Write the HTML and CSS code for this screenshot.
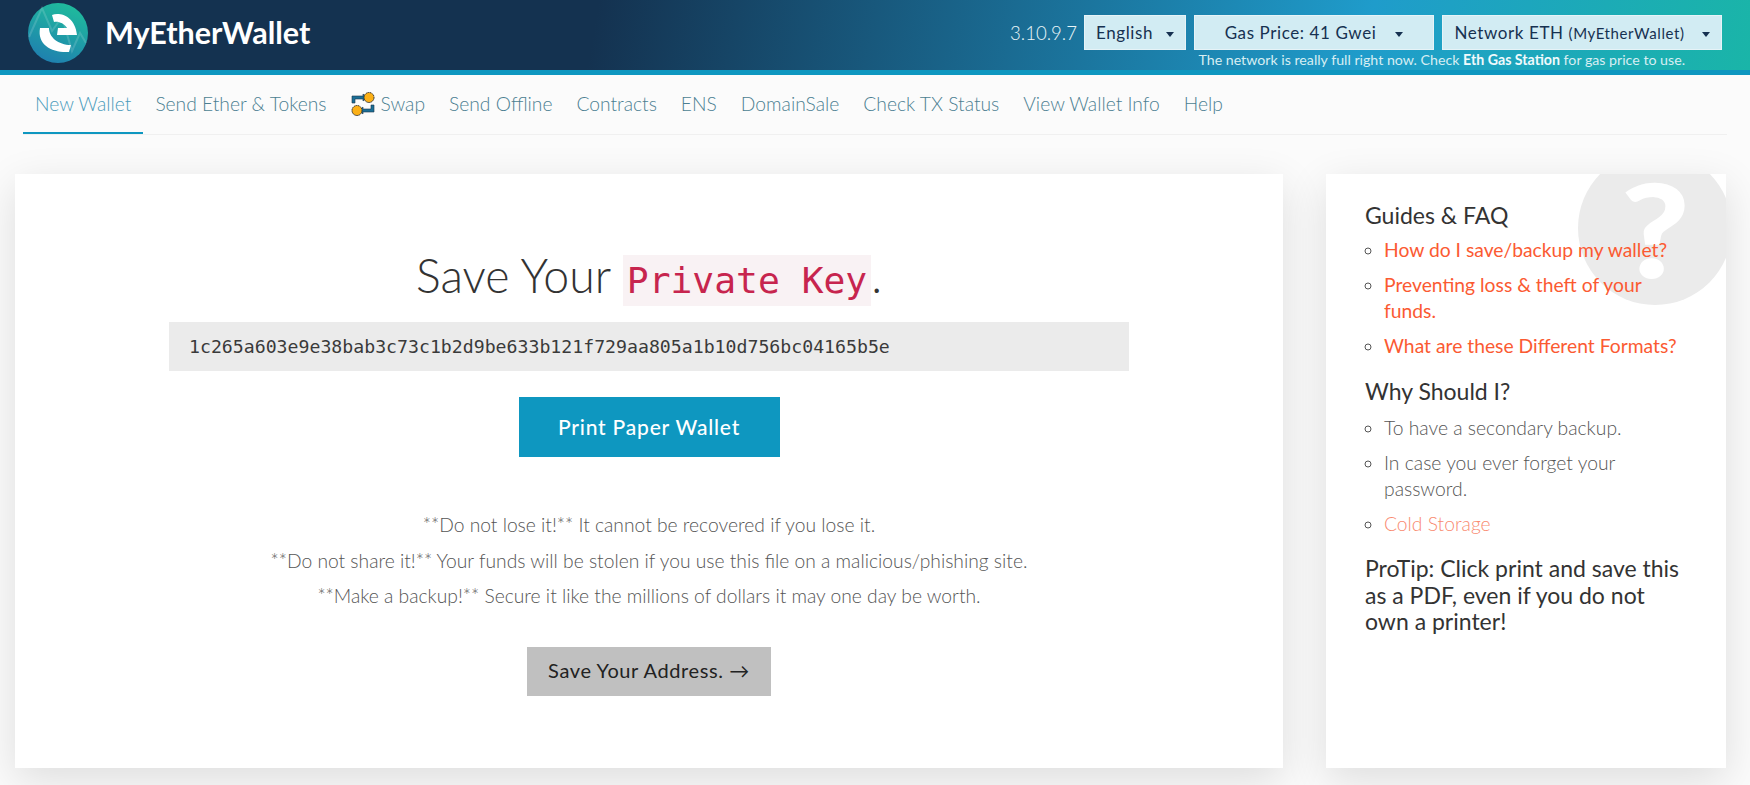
FILE: index.html
```html
<!DOCTYPE html>
<html lang="en">

<head>
    <meta charset="UTF-8">
    <meta name="viewport" content="width=device-width, initial-scale=1.0">
    <title>MyEtherWallet</title>

    <link rel="stylesheet" href="styles.css">
</head>

<body>
    <header class="top-bar">
        <div class="brand">
            <svg class="logo" viewBox="0 0 60 60" width="60" height="60">
                <defs>
                    <linearGradient id="logoFill" x1="0.7" y1="0" x2="0.3" y2="1">
                        <stop offset="0" stop-color="#1fbc9c"></stop>
                        <stop offset="1" stop-color="#1f7fb0"></stop>
                    </linearGradient>
                </defs>
                <circle cx="30" cy="30" r="30" fill="url(#logoFill)"></circle>
                <path d="M1 34 L14 5 L24 28 L34 14 L44 48 L52 30 L58 40" fill="none" stroke="#ffffff" stroke-opacity="0.15" stroke-width="2"></path>
                <path d="M24 12 C32 9 47 13 49 32 L29 32 L30 25 L39 25 C36 20 30 18 26 19 Z" fill="#ffffff"></path>
                <path d="M12 25 L21 25 C21 34 30 42 43 42 L41 49 C24 50 9 42 12 25 Z" fill="#ffffff"></path>
            </svg>
            <span class="brand-name">MyEtherWallet</span>
        </div>
        <div class="top-right">
            <div class="dropdowns">
                <span class="version">3.10.9.7</span>
                <button type="button" class="dd dd-lang">English <i class="caret"></i></button>
                <button type="button" class="dd dd-gas">Gas Price: 41 Gwei <i class="caret"></i></button>
                <button type="button" class="dd dd-net">Network ETH <small>(MyEtherWallet)</small> <i class="caret"></i></button>
            </div>
            <p class="gas-note">The network is really full right now. Check <b>Eth Gas Station</b> for gas price to use.</p>
        </div>
    </header>

    <nav class="main-nav">
        <a class="active" href="#">New Wallet</a>
        <a href="#">Send Ether &amp; Tokens</a>
        <a href="#">
            <svg class="swap-icon" viewBox="0 0 24 24" width="24" height="24">
                <path d="M1 4 H12 V2 L16 5.5 L12 9 V7 H4 V11 H1 Z" fill="#1b6f97" stroke="#1d3447" stroke-width="0.6"></path>
                <path d="M23 20 H12 V22 L8 18.5 L12 15 V17 H20 V13 H23 Z" fill="#1b6f97" stroke="#1d3447" stroke-width="0.6"></path>
                <circle cx="18" cy="5.5" r="5" fill="#fbb017" stroke="#222" stroke-width="1" stroke-dasharray="1.4 0.6"></circle>
                <circle cx="6" cy="18.5" r="5" fill="#fbb017" stroke="#222" stroke-width="1" stroke-dasharray="1.4 0.6"></circle>
            </svg>
            Swap
        </a>
        <a href="#">Send Offline</a>
        <a href="#">Contracts</a>
        <a href="#">ENS</a>
        <a href="#">DomainSale</a>
        <a href="#">Check TX Status</a>
        <a href="#">View Wallet Info</a>
        <a href="#">Help</a>
    </nav>

    <div class="content">
        <main class="card">
            <h1>Save Your <code>Private Key</code>.</h1>
            <div class="key-box">1c265a603e9e38bab3c73c1b2d9be633b121f729aa805a1b10d756bc04165b5e</div>
            <a class="btn btn-primary" href="#">Print Paper Wallet</a>
            <div class="warnings">
                <p>**Do not lose it!** It cannot be recovered if you lose it.</p>
                <p>**Do not share it!** Your funds will be stolen if you use this file on a malicious/phishing site.</p>
                <p>**Make a backup!** Secure it like the millions of dollars it may one day be worth.</p>
            </div>
            <a class="btn btn-next" href="#">Save Your Address. &rarr;</a>
        </main>

        <aside class="sidebar">
            <div class="help-mark"><span>?</span></div>
            <h4>Guides &amp; FAQ</h4>
            <ul>
                <li><a href="#">How do I save/backup my wallet?</a></li>
                <li><a href="#">Preventing loss &amp; theft of your funds.</a></li>
                <li><a href="#">What are these Different Formats?</a></li>
            </ul>
            <h4>Why Should I?</h4>
            <ul class="light">
                <li>To have a secondary backup.</li>
                <li>In case you ever forget your password.</li>
                <li><a href="#">Cold Storage</a></li>
            </ul>
            <h4 class="tip">ProTip: Click print and save this as a PDF, even if you do not own a printer!</h4>
        </aside>
    </div>
</body>

</html>
```
FILE: styles.css
```css
* {
    box-sizing: border-box;
}

body {
    font-family: Lato, "Open Sans", sans-serif;
    background-color: #fbfbfb;
    color: #333;
    margin: 0;
    height: 785px;
    overflow: hidden;
}

.top-bar {
    height: 75px;
    border-bottom: 5px solid #0e97c0;
    background: linear-gradient(100deg, #143250 0%, #143250 34%, #1f9ccb 78%, #1ab5a8 100%);
    display: flex;
    justify-content: space-between;
    padding: 3px 28px 0 28px;
}

.brand {
    display: flex;
    align-items: flex-start;
}

.brand-name {
    color: #fff;
    font-weight: 700;
    font-size: 30.5px;
    line-height: 38px;
    margin: 10px 0 0 17px;
}

.top-right {
    display: flex;
    flex-direction: column;
    align-items: flex-end;
    padding-top: 12px;
}

.dropdowns {
    display: flex;
    align-items: center;
    gap: 8px;
}

.version {
    color: #e8f5f8;
    font-weight: 300;
    font-size: 18.6px;
    margin-right: -1px;
}

.dd {
    height: 35px;
    border: 1px solid #e6f3f7;
    background-color: #d2ecf3;
    color: #163151;
    font-family: Lato, sans-serif;
    font-size: 17px;
    letter-spacing: 0.6px;
    padding: 0;
    white-space: nowrap;
}

.dd small {
    font-size: 15px;
}

.caret {
    display: inline-block;
    border-top: 5px solid #163151;
    border-left: 4.5px solid transparent;
    border-right: 4.5px solid transparent;
    margin-left: 8px;
    vertical-align: middle;
}

.dd-lang {
    width: 102px;
}

.dd-gas {
    width: 240px;
}

.dd-gas .caret {
    margin-left: 14px;
}

.dd-net {
    width: 280px;
}

.dd-net .caret {
    margin-left: 12px;
}

.gas-note {
    color: #d7eef3;
    font-size: 14.2px;
    line-height: 17px;
    margin: 1px 37px 0 0;
    white-space: nowrap;
}

.gas-note b {
    color: #f0fafc;
}

.main-nav {
    height: 60px;
    margin: 0 23px;
    border-bottom: 1px solid #f0f0f0;
    display: flex;
    align-items: stretch;
}

.main-nav a {
    display: flex;
    align-items: center;
    gap: 6px;
    padding: 0 12px;
    color: #4c7f92;
    font-size: 19.25px;
    font-weight: 300;
    text-decoration: none;
    white-space: nowrap;
    border-bottom: 2px solid transparent;
}

.main-nav a.active {
    color: #4b9cbb;
    border-bottom-color: #0e97c0;
}

.content {
    display: flex;
    align-items: stretch;
    gap: 43px;
    margin: 39px 24px 0 15px;
}

.card {
    width: 1268px;
    height: 594px;
    background-color: #fff;
    box-shadow: 0 12px 40px rgba(0, 0, 0, 0.12);
    padding-top: 76px;
    display: flex;
    flex-direction: column;
    align-items: center;
}

h1 {
    font-size: 46.5px;
    font-weight: 300;
    line-height: 50px;
    margin: 0;
    color: #333;
}

h1 code {
    font-family: "DejaVu Sans Mono", monospace;
    font-size: 36.3px;
    color: #c7254e;
    background-color: #f9f2f4;
    padding: 4px;
}

.key-box {
    width: 960px;
    height: 49px;
    margin-top: 16px;
    padding: 0 20px;
    background-color: #ebebeb;
    font-family: "DejaVu Sans Mono", monospace;
    font-size: 18.2px;
    line-height: 49px;
    color: #3a3a3a;
}

.btn {
    display: block;
    text-align: center;
    text-decoration: none;
}

.btn-primary {
    width: 261px;
    height: 60px;
    margin-top: 26px;
    background-color: #0e97c0;
    color: #fff;
    font-size: 21px;
    font-weight: 500;
    letter-spacing: 0.8px;
    line-height: 60px;
}

.warnings {
    margin-top: 50px;
    color: #555;
    text-align: center;
    font-size: 19.25px;
    font-weight: 300;
}

.warnings p {
    margin: 0;
    line-height: 35.5px;
}

.btn-next {
    width: 244px;
    height: 49px;
    margin-top: 33.5px;
    background-color: #c0c0c0;
    color: #222;
    font-size: 20px;
    letter-spacing: 0.6px;
    line-height: 47px;
}

.sidebar {
    width: 400px;
    height: 594px;
    background-color: #fff;
    box-shadow: 0 12px 40px rgba(0, 0, 0, 0.12);
    padding: 27px 39px 0;
    position: relative;
    overflow: hidden;
    font-size: 19.3px;
}

.help-mark {
    position: absolute;
    top: -23px;
    left: 252px;
    width: 154px;
    height: 154px;
    border-radius: 50%;
    background-color: #ebebeb;
    color: #fff;
    font-size: 130px;
    font-weight: 900;
    line-height: 154px;
    text-align: center;
}

.help-mark span {
    display: inline-block;
    transform: scaleX(1.15);
}

h4 {
    position: relative;
    font-size: 23px;
    font-weight: 400;
    line-height: 28px;
    margin: 0;
    color: #333;
}

.sidebar ul {
    position: relative;
    list-style: circle;
    margin: 7.5px 0 17.5px;
    padding: 0 0 0 19px;
}

.sidebar ul.light {
    margin-top: 9.5px;
}

.sidebar li {
    line-height: 26.5px;
    margin-bottom: 8.6px;
    color: #555;
}

.sidebar a {
    color: #fb5a32;
    text-decoration: none;
}

.sidebar ul.light li {
    font-weight: 300;
}

.sidebar ul.light a {
    color: #f98a70;
}

.tip {
    line-height: 26.5px;
    margin-top: 4px;
}
```
